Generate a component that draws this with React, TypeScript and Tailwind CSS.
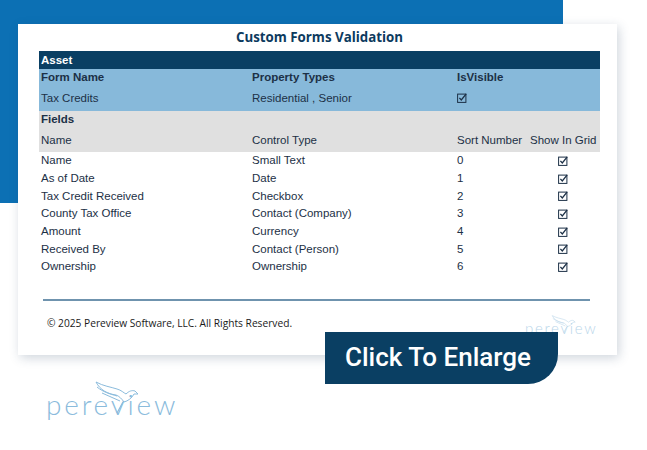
// Custom forms validation report, shown as a marketing tile

const fieldRows = [
  { name: 'Name', control: 'Small Text', sort: 0 },
  { name: 'As of Date', control: 'Date', sort: 1 },
  { name: 'Tax Credit Received', control: 'Checkbox', sort: 2 },
  { name: 'County Tax Office', control: 'Contact (Company)', sort: 3 },
  { name: 'Amount', control: 'Currency', sort: 4 },
  { name: 'Received By', control: 'Contact (Person)', sort: 5 },
  { name: 'Ownership', control: 'Ownership', sort: 6 },
]

const rowGrid = 'grid grid-cols-[211px_205px_73px_70px] items-center pl-[2px]'

function CheckIcon() {
  return (
    <svg width="10" height="10" viewBox="0 0 10 10" fill="none" className="block">
      <rect x="0.6" y="1.1" width="8.3" height="8.3" stroke="#1c3046" strokeWidth="1" />
      <path d="M2.4 4.8 L4.3 7 L9.2 0.9" stroke="#1c3046" strokeWidth="1.3" />
    </svg>
  )
}

function Logo({ small }: { small?: boolean }) {
  return (
    <div className={small ? 'relative w-[72px] h-[22px] opacity-60' : 'relative w-[132px] h-[40px]'}>
      <svg
        viewBox="0 0 132 40"
        className="absolute inset-0 w-full h-full"
        fill="none"
        stroke="#8abbdc"
        strokeWidth="1"
      >
        <path d="M50 1 C57 5 65 6 71 8 C75 9 78 12 80 13 C83 10 86 9 89 10 C90 11 91 12 92 13 L88 13 C86 17 82 20 78 21 C76 18 73 15 70 14 C62 13 54 9 50 1 Z" />
        <path d="M51 6 C57 11 64 13 71 15 M56 12 C62 15 68 17 74 20" />
        <path d="M77 21 L71 32" strokeWidth="1.2" />
      </svg>
      <span
        className={
          small
            ? 'absolute left-0 bottom-[1px] font-["Lato"] font-light text-[#8abbdc] text-[15px] leading-[15px] tracking-[1.7px]'
            : 'absolute left-0 bottom-[3px] font-["Lato"] font-light text-[#8abbdc] text-[28px] leading-[28px] tracking-[2.8px]'
        }
      >
        pereview
      </span>
    </div>
  )
}

export default function App() {
  return (
    <div className="relative w-[647px] h-[450px] bg-white overflow-hidden font-['Liberation_Sans',sans-serif]">
      <div className="w-[563px] h-[203px] bg-[#0c70b4]" />

      <div className="absolute left-[18px] top-[24px] w-[599px] h-[331px] bg-white shadow-[2px_3px_10px_rgba(40,70,100,0.22)] pl-[21px] pr-[17px] flex flex-col">
        <h1 className="h-[27px] flex items-center justify-center font-['Open_Sans',sans-serif] font-bold text-[13.3px] text-[#0c3a5e]">
          Custom Forms Validation
        </h1>

        <div className="text-[11.5px] text-[#1c3046]">
          <div className="h-[18px] bg-[#0a3f63] text-white font-bold pl-[2px] pt-[1px] flex items-center">Asset</div>
          <div className="bg-[#87b9da] h-[41.5px]">
            <div className={`${rowGrid} h-[17px] font-bold`}>
              <span>Form Name</span>
              <span>Property Types</span>
              <span>IsVisible</span>
            </div>
            <div className={`${rowGrid} h-[24.5px]`}>
              <span>Tax Credits</span>
              <span>Residential , Senior</span>
              <CheckIcon />
            </div>
          </div>
          <div className="bg-[#e0e0e0] h-[41.5px]">
            <div className="h-[17px] font-bold pl-[2px] pt-[2px] flex items-center">Fields</div>
            <div className={`${rowGrid} h-[24.5px] pt-[2px]`}>
              <span>Name</span>
              <span>Control Type</span>
              <span>Sort Number</span>
              <span className="whitespace-nowrap">Show In Grid</span>
            </div>
          </div>
          <div>
            {fieldRows.map((row) => (
              <div key={row.name} className={`${rowGrid} h-[17.7px]`}>
                <span>{row.name}</span>
                <span>{row.control}</span>
                <span>{row.sort}</span>
                <span className="pl-[28px]">
                  <CheckIcon />
                </span>
              </div>
            ))}
          </div>
        </div>

        <div className="mt-[23px] ml-[4px] mr-[10px] h-[2px] bg-[#6f93ae]" />
        <p className="mt-[15px] ml-[8px] font-['Open_Sans',sans-serif] text-[10.2px] leading-[14px] text-[#1a1a1a]">
          © 2025 Pereview Software, LLC. All Rights Reserved.
        </p>
        <div className="absolute left-[507px] top-[291px]">
          <Logo small />
        </div>
      </div>

      <div className="absolute left-[325px] top-[332px] w-[233px] h-[52px] bg-[#0a3f63] rounded-br-[30px] flex items-center pl-[20px] pb-[2px] font-['Roboto',sans-serif] font-medium text-[26px] text-white">
        Click To Enlarge
      </div>

      <div className="absolute left-[46px] top-[381px]">
        <Logo />
      </div>
    </div>
  )
}
